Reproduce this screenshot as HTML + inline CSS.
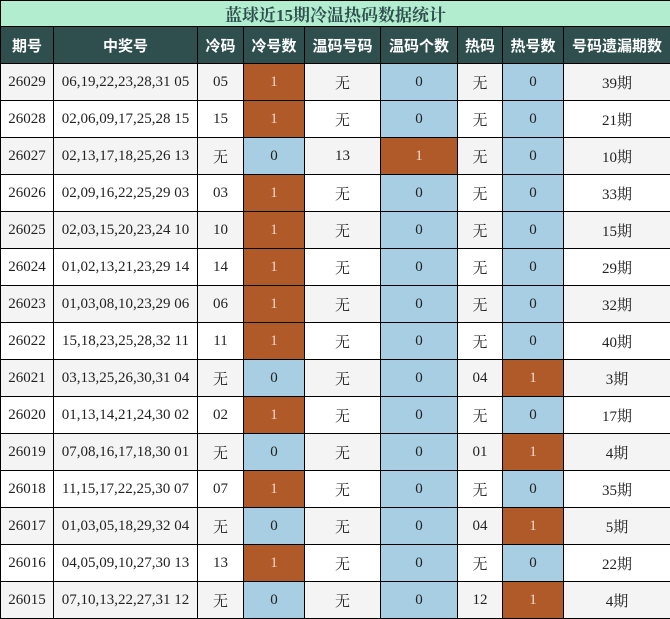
<!DOCTYPE html>
<html><head><meta charset="utf-8"><style>
*{margin:0;padding:0;box-sizing:border-box}
body{width:670px;height:619px;background:#fff;overflow:hidden}
table{border-collapse:collapse;table-layout:fixed;width:670px;font-family:"Liberation Serif","Noto Serif CJK SC",serif;font-size:15px;color:#222}
td,th{border:1.5px solid #000;text-align:center;padding:0;overflow:hidden;white-space:nowrap}
.t td{height:26px;background:#b3edcf;color:#2f4f4f;font-family:"Liberation Serif","Noto Serif CJK SC",serif;font-weight:bold;font-size:17px}
th{height:37px;background:#2f4f4f;color:#fff;font-family:"Liberation Sans","Noto Sans CJK SC",sans-serif;font-size:15px;font-weight:bold}
tr.r td{height:37px}
tr.r:nth-child(odd) td{background:#f4f4f4}
tr.r:nth-child(even) td{background:#fff}
tr.r td.o{background:#b05a2a;color:#f3d8c8}
tr.r td.b{background:#a7cee2;color:#222}
</style></head><body>
<table>
<colgroup><col style="width:53px"><col style="width:144px"><col style="width:46px"><col style="width:61px"><col style="width:76px"><col style="width:77px"><col style="width:45px"><col style="width:61px"><col style="width:107px"></colgroup>
<tr class="t"><td colspan="9">蓝球近15期冷温热码数据统计</td></tr>
<tr><th>期号</th><th>中奖号</th><th>冷码</th><th>冷号数</th><th>温码号码</th><th>温码个数</th><th>热码</th><th>热号数</th><th>号码遗漏期数</th></tr>
<tr class="r"><td>26029</td><td>06,19,22,23,28,31 05</td><td>05</td><td class="o">1</td><td>无</td><td class="b">0</td><td>无</td><td class="b">0</td><td>39期</td></tr>
<tr class="r"><td>26028</td><td>02,06,09,17,25,28 15</td><td>15</td><td class="o">1</td><td>无</td><td class="b">0</td><td>无</td><td class="b">0</td><td>21期</td></tr>
<tr class="r"><td>26027</td><td>02,13,17,18,25,26 13</td><td>无</td><td class="b">0</td><td>13</td><td class="o">1</td><td>无</td><td class="b">0</td><td>10期</td></tr>
<tr class="r"><td>26026</td><td>02,09,16,22,25,29 03</td><td>03</td><td class="o">1</td><td>无</td><td class="b">0</td><td>无</td><td class="b">0</td><td>33期</td></tr>
<tr class="r"><td>26025</td><td>02,03,15,20,23,24 10</td><td>10</td><td class="o">1</td><td>无</td><td class="b">0</td><td>无</td><td class="b">0</td><td>15期</td></tr>
<tr class="r"><td>26024</td><td>01,02,13,21,23,29 14</td><td>14</td><td class="o">1</td><td>无</td><td class="b">0</td><td>无</td><td class="b">0</td><td>29期</td></tr>
<tr class="r"><td>26023</td><td>01,03,08,10,23,29 06</td><td>06</td><td class="o">1</td><td>无</td><td class="b">0</td><td>无</td><td class="b">0</td><td>32期</td></tr>
<tr class="r"><td>26022</td><td>15,18,23,25,28,32 11</td><td>11</td><td class="o">1</td><td>无</td><td class="b">0</td><td>无</td><td class="b">0</td><td>40期</td></tr>
<tr class="r"><td>26021</td><td>03,13,25,26,30,31 04</td><td>无</td><td class="b">0</td><td>无</td><td class="b">0</td><td>04</td><td class="o">1</td><td>3期</td></tr>
<tr class="r"><td>26020</td><td>01,13,14,21,24,30 02</td><td>02</td><td class="o">1</td><td>无</td><td class="b">0</td><td>无</td><td class="b">0</td><td>17期</td></tr>
<tr class="r"><td>26019</td><td>07,08,16,17,18,30 01</td><td>无</td><td class="b">0</td><td>无</td><td class="b">0</td><td>01</td><td class="o">1</td><td>4期</td></tr>
<tr class="r"><td>26018</td><td>11,15,17,22,25,30 07</td><td>07</td><td class="o">1</td><td>无</td><td class="b">0</td><td>无</td><td class="b">0</td><td>35期</td></tr>
<tr class="r"><td>26017</td><td>01,03,05,18,29,32 04</td><td>无</td><td class="b">0</td><td>无</td><td class="b">0</td><td>04</td><td class="o">1</td><td>5期</td></tr>
<tr class="r"><td>26016</td><td>04,05,09,10,27,30 13</td><td>13</td><td class="o">1</td><td>无</td><td class="b">0</td><td>无</td><td class="b">0</td><td>22期</td></tr>
<tr class="r"><td>26015</td><td>07,10,13,22,27,31 12</td><td>无</td><td class="b">0</td><td>无</td><td class="b">0</td><td>12</td><td class="o">1</td><td>4期</td></tr>
</table>
</body></html>
